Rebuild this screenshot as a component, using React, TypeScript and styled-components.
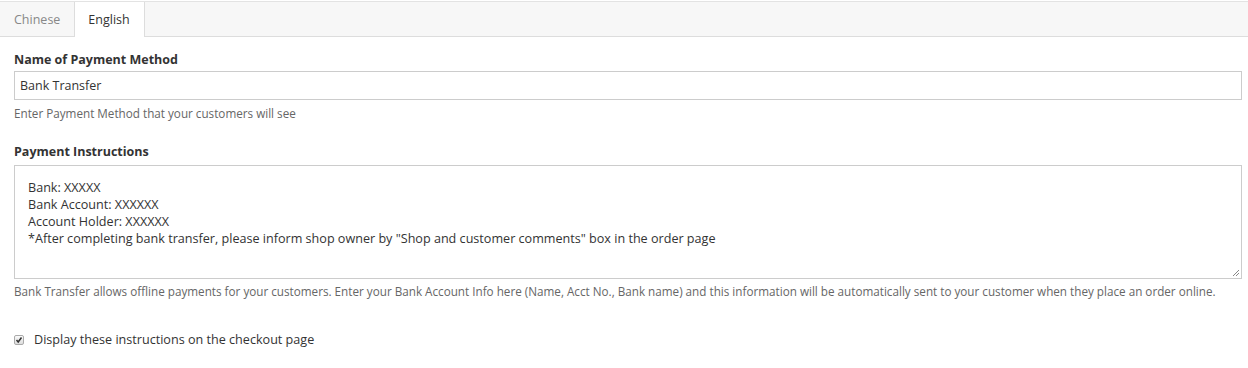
import React from "react";
import styled, { createGlobalStyle } from "styled-components";

const Global = createGlobalStyle`
  html, body { margin: 0; padding: 0; background: #fff; }
  body { font-family: "Open Sans", "Liberation Sans", sans-serif; color: #333; }
  * { box-sizing: border-box; }
`;

const Page = styled.div`
  width: 1248px;
  padding-top: 1px;
`;

const TabBar = styled.div`
  display: flex;
  height: 36px;
  background: #f7f7f7;
  border-top: 1px solid #e3e3e3;
  border-bottom: 1px solid #ddd;
`;

const Tab = styled.div<{ $active?: boolean }>`
  padding: 0 14px 0 13px;
  height: ${(p) => (p.$active ? "35px" : "34px")};
  display: flex;
  align-items: center;
  font-size: 12.5px;
  color: ${(p) => (p.$active ? "#333" : "#888")};
  background: ${(p) => (p.$active ? "#fff" : "transparent")};
  border-left: 1px solid ${(p) => (p.$active ? "#ddd" : "transparent")};
  border-right: 1px solid ${(p) => (p.$active ? "#ddd" : "transparent")};
  margin-left: ${(p) => (p.$active ? "-1px" : "0")};
`;

const Body = styled.div`
  padding: 14px 6px 0 14px;
`;

const Label = styled.div<{ $gap: number }>`
  font-size: 12.5px;
  font-weight: 700;
  color: #333;
  line-height: 18px;
  margin-bottom: ${(p) => p.$gap}px;
`;

const TextInput = styled.div`
  height: 29px;
  border: 1px solid #ccc;
  padding: 0 5px;
  display: flex;
  align-items: center;
  font-size: 12.5px;
  color: #333;
`;

const Help = styled.div<{ $top: number; $gap: number }>`
  font-size: 11.7px;
  color: #666;
  line-height: 16px;
  margin-top: ${(p) => p.$top}px;
  margin-bottom: ${(p) => p.$gap}px;
`;

const TextArea = styled.div`
  position: relative;
  height: 114px;
  border: 1px solid #ccc;
  padding: 13px 13px;
  font-size: 12.6px;
  line-height: 17px;
  color: #333;
`;

const Grip = styled.svg`
  position: absolute;
  right: 1px;
  bottom: 1px;
`;

const CheckRow = styled.label`
  display: flex;
  align-items: center;
  gap: 10px;
  font-size: 12.6px;
  color: #333;
`;

const Box = styled.span`
  width: 10px;
  height: 10px;
  border: 1px solid #aaa;
  border-radius: 2px;
  background: linear-gradient(#fafafa, #ddd);
  display: flex;
  align-items: center;
  justify-content: center;
`;

export default function App() {
  return (
    <Page>
      <Global />
      <TabBar>
        <Tab>Chinese</Tab>
        <Tab $active>English</Tab>
      </TabBar>
      <Body>
        <Label $gap={2}>Name of Payment Method</Label>
        <TextInput>Bank Transfer</TextInput>
        <Help $top={5} $gap={22}>Enter Payment Method that your customers will see</Help>
        <Label $gap={4}>Payment Instructions</Label>
        <TextArea>
          <div>Bank: XXXXX</div>
          <div>Bank Account: XXXXXX</div>
          <div>Account Holder: XXXXXX</div>
          <div>*After completing bank transfer, please inform shop owner by "Shop and customer comments" box in the order page</div>
          <Grip width="8" height="8" viewBox="0 0 8 8">
            <path d="M7 1 L1 7 M7 4 L4 7" stroke="#888" strokeWidth="1" />
          </Grip>
        </TextArea>
        <Help $top={4} $gap={32}>
          Bank Transfer allows offline payments for your customers. Enter your Bank Account Info here (Name, Acct No., Bank name) and this information will be automatically sent to your customer when they place an order online.
        </Help>
        <CheckRow>
          <Box>
            <svg width="8" height="8" viewBox="0 0 8 8">
              <path d="M1.5 4 L3.2 6 L6.5 1.5" stroke="#333" strokeWidth="1.5" fill="none" />
            </svg>
          </Box>
          Display these instructions on the checkout page
        </CheckRow>
      </Body>
    </Page>
  );
}
